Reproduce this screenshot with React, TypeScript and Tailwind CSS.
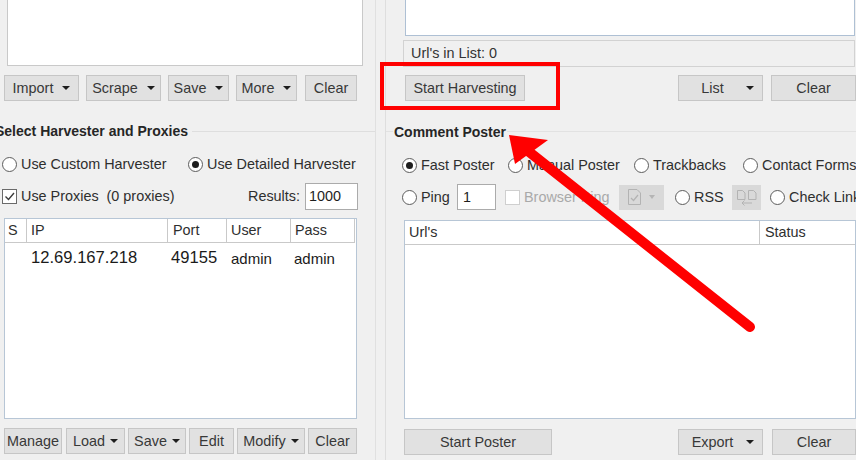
import React from "react";

function Caret() {
  return <span className="inline-block h-0 w-0 shrink-0 border-x-[4px] border-t-[4px] border-x-transparent border-t-[#1e1e1e]" />;
}

function Btn({
  className = "",
  drop,
  tight,
  children,
}: {
  className?: string;
  drop?: boolean;
  tight?: boolean;
  children: React.ReactNode;
}) {
  return (
    <div
      className={`flex h-[26px] shrink-0 items-center justify-center border border-[#c6c6c6] bg-[#e1e1e1] text-[#383838] ${
        tight ? "gap-[5px]" : "gap-[9px]"
      } ${className}`}
    >
      <span className="whitespace-nowrap">{children}</span>
      {drop && <Caret />}
    </div>
  );
}

function SplitBtn({ className = "", children }: { className?: string; children: React.ReactNode }) {
  return (
    <div className={`flex h-[26px] shrink-0 items-center border border-[#c6c6c6] bg-[#e1e1e1] text-[#383838] ${className}`}>
      <span className="w-[67px] text-center">{children}</span>
      <Caret />
    </div>
  );
}

function Radio({ on }: { on?: boolean }) {
  return (
    <span className="flex h-[15px] w-[15px] shrink-0 items-center justify-center rounded-full border border-[#5c5c5c] bg-white">
      {on && <span className="h-[7px] w-[7px] rounded-full bg-[#1e1e1e]" />}
    </span>
  );
}

function RadioItem({ on, label, className = "" }: { on?: boolean; label: string; className?: string }) {
  return (
    <div className={`flex shrink-0 items-center gap-[4px] ${className}`}>
      <Radio on={on} />
      <span className="whitespace-nowrap">{label}</span>
    </div>
  );
}

function CheckBox({ on, disabled }: { on?: boolean; disabled?: boolean }) {
  return (
    <span
      className={`flex h-[15px] w-[15px] shrink-0 items-center justify-center border bg-white ${
        disabled ? "border-[#cfcfcf]" : "border-[#6a6a6a]"
      }`}
    >
      {on && (
        <svg width="11" height="11" viewBox="0 0 11 11">
          <path d="M1.5 5.5 L4.5 8.5 L10 2" fill="none" stroke="#3a3a3a" strokeWidth="1.4" />
        </svg>
      )}
    </span>
  );
}

export default function App() {
  return (
    <div className="relative flex h-[460px] w-[856px] overflow-hidden bg-[#f0f0f0] font-['Liberation_Sans',Arial,sans-serif] text-[14.4px] leading-none text-[#2e2e2e]">
      {/* LEFT COLUMN */}
      <div className="flex w-[375px] shrink-0 flex-col">
        <div className="ml-[7px] mt-[-2px] h-[68px] w-[356px] shrink-0 border border-[#c9c9c9] bg-white" />
        <div className="ml-[4px] mt-[9px] flex h-[26px] shrink-0">
          <Btn className="w-[75px]" drop>
            Import
          </Btn>
          <Btn className="ml-[7px] w-[75px]" drop>
            Scrape
          </Btn>
          <Btn className="ml-[7px] w-[61px]" drop>
            Save
          </Btn>
          <Btn className="ml-[7px] w-[61px]" drop>
            More
          </Btn>
          <Btn className="ml-[8px] w-[52px]">Clear</Btn>
        </div>

        <div className="mt-[22px] flex h-[16px] shrink-0 items-center">
          <span className="ml-[-5px] whitespace-nowrap text-[14px] font-bold text-[#262626]">Select Harvester and Proxies</span>
          <span className="ml-[4px] h-px flex-1 bg-[#dedede]" />
        </div>

        <div className="mt-[11px] flex h-[28px] shrink-0 items-center">
          <RadioItem className="ml-[2px] w-[186px]" label="Use Custom Harvester" />
          <RadioItem on label="Use Detailed Harvester" />
        </div>

        <div className="mt-[4px] flex h-[28px] shrink-0 items-center">
          <div className="ml-[2px] flex items-center gap-[4px]">
            <CheckBox on />
            <span className="whitespace-pre">Use Proxies  (0 proxies)</span>
          </div>
          <span className="ml-auto">Results:</span>
          <div className="ml-[5px] mr-[17px] flex h-[27px] w-[53px] items-center border border-[#ababab] bg-white pl-[3px] text-[#1e1e1e]">
            1000
          </div>
        </div>

        <div className="ml-[4px] mt-[8px] flex h-[201px] w-[353px] shrink-0 flex-col border border-[#b7c6d6] bg-white">
          <div className="flex h-[24px] shrink-0 items-center">
            <div className="flex h-full w-[22px] items-center border-b border-r border-[#c9c9c9] pl-[3px]">S</div>
            <div className="flex h-full w-[141px] items-center border-b border-r border-[#c9c9c9] pl-[4px]">IP</div>
            <div className="flex h-full w-[59px] items-center border-b border-r border-[#c9c9c9] pl-[5px]">Port</div>
            <div className="flex h-full w-[64px] items-center border-b border-r border-[#c9c9c9] pl-[4px]">User</div>
            <div className="flex h-full w-[64px] items-center border-b border-r border-[#c9c9c9] pl-[4px]">Pass</div>
          </div>
          <div className="flex h-[30px] shrink-0 items-center text-[#1a1a1a]">
            <span className="w-[22px]" />
            <span className="w-[141px] pl-[4px] text-[16.6px]">12.69.167.218</span>
            <span className="w-[59px] pl-[3px] text-[16.6px]">49155</span>
            <span className="w-[64px] pl-[4px] text-[15px]">admin</span>
            <span className="w-[64px] pl-[3px] text-[15px]">admin</span>
          </div>
        </div>

        <div className="ml-[4px] mt-[9px] flex h-[26px] shrink-0">
          <Btn className="w-[58px]">Manage</Btn>
          <Btn className="ml-[4px] w-[59px]" drop tight>
            Load
          </Btn>
          <Btn className="ml-[3px] w-[58px]" drop tight>
            Save
          </Btn>
          <Btn className="ml-[3px] w-[45px]">Edit</Btn>
          <Btn className="ml-[3px] w-[68px]" drop tight>
            Modify
          </Btn>
          <Btn className="ml-[3px] w-[49px]">Clear</Btn>
        </div>
      </div>

      {/* DIVIDER */}
      <div className="w-[10px] shrink-0 border-l border-[#e0e0e0]" />

      {/* RIGHT COLUMN */}
      <div className="flex w-[471px] min-w-0 shrink-0 flex-col overflow-hidden border-l border-[#dedede]">
        <div className="ml-[19px] mt-[-2px] h-[38px] w-[450px] shrink-0 border border-[#aec0d4] bg-white" />
        <div className="ml-[17px] mt-[4px] flex h-[27px] w-[452px] shrink-0 items-center border border-[#d2d2d2] pl-[7px] text-[#333]">
          Url's in List: 0
        </div>
        <div className="mt-[8px] flex h-[26px] w-[470px] shrink-0">
          <Btn className="ml-[19px] w-[120px]">Start Harvesting</Btn>
          <div className="flex-1" />
          <SplitBtn className="w-[85px]">List</SplitBtn>
          <Btn className="ml-[8px] w-[85px]">Clear</Btn>
        </div>

        <div className="mt-[30px] flex flex-1 flex-col border-t border-[#e2e2e2]">
          <div className="mt-[-8px] flex h-[16px] shrink-0 items-center">
            <span className="ml-[7px] bg-[#f0f0f0] px-[1px] text-[14px] font-bold text-[#262626]">Comment Poster</span>
          </div>

          <div className="mt-[11px] flex h-[28px] shrink-0 items-center">
            <RadioItem on className="ml-[16px] w-[106px]" label="Fast Poster" />
            <RadioItem className="w-[126px]" label="Manual Poster" />
            <RadioItem className="w-[109px]" label="Trackbacks" />
            <RadioItem label="Contact Forms" />
          </div>

          <div className="mt-[4px] flex h-[28px] shrink-0 items-center">
            <RadioItem className="ml-[16px] w-[55px]" label="Ping" />
            <div className="flex h-[26px] w-[39px] shrink-0 items-center border border-[#ababab] bg-white pl-[5px] text-[#1e1e1e]">
              1
            </div>
            <div className="ml-[9px] flex w-[114px] shrink-0 items-center gap-[4px]">
              <CheckBox disabled />
              <span className="whitespace-nowrap text-[#a9a9a9]">Browser Ping</span>
            </div>
            <div className="flex h-[25px] w-[45px] shrink-0 items-center gap-[7px] bg-[#d9d9d9] pl-[8px]">
              <svg width="15" height="18" viewBox="0 0 15 18">
                <path d="M1.5 1.5 H10 L13.5 5 V16.5 H1.5 Z" fill="none" stroke="#b3b3b3" strokeWidth="1" />
                <path d="M4 10 L6.5 12.5 L11 7" fill="none" stroke="#b3b3b3" strokeWidth="1.2" />
              </svg>
              <span className="inline-block h-0 w-0 border-x-[3.5px] border-t-[4px] border-x-transparent border-t-[#b5b5b5]" />
            </div>
            <RadioItem className="ml-[11px] w-[57px]" label="RSS" />
            <div className="flex h-[25px] w-[29px] shrink-0 items-center justify-center bg-[#d9d9d9]">
              <svg width="22" height="17" viewBox="0 0 22 17">
                <path d="M1.5 1.5 H6.5 L9 4 V10.5 H1.5 Z" fill="none" stroke="#b3b3b3" strokeWidth="1" />
                <path d="M12.5 1.5 H17.5 L20 4 V10.5 H12.5 Z" fill="none" stroke="#b3b3b3" strokeWidth="1" />
                <path d="M16 14 H6 M8.5 11.5 L6 14 L8.5 16.5" fill="none" stroke="#b3b3b3" strokeWidth="1" />
              </svg>
            </div>
            <RadioItem className="ml-[9px]" label="Check Links" />
          </div>

          <div className="ml-[18px] mt-[9px] flex h-[199px] w-[452px] shrink-0 flex-col border border-[#b7c6d6] bg-white">
            <div className="flex h-[24px] shrink-0">
              <div className="flex h-full w-[355px] items-center border-b border-r border-[#c9c9c9] pl-[4px]">Url's</div>
              <div className="flex h-full flex-1 items-center border-b border-[#c9c9c9] pl-[5px]">Status</div>
            </div>
          </div>

          <div className="mt-[10px] flex h-[26px] w-[470px] shrink-0">
            <Btn className="ml-[18px] w-[148px]">Start Poster</Btn>
            <div className="flex-1" />
            <SplitBtn className="w-[85px]">Export</SplitBtn>
            <Btn className="ml-[9px] w-[84px]">Clear</Btn>
          </div>
        </div>
      </div>

      {/* ANNOTATIONS */}
      <div className="pointer-events-none absolute left-[380px] top-[62px] h-[48px] w-[180px] border-[4px] border-[#ff0000]" />
      <svg className="pointer-events-none absolute left-0 top-0" width="856" height="460" viewBox="0 0 856 460">
        <line x1="750" y1="327" x2="528" y2="151" stroke="#ff0000" strokeWidth="10" strokeLinecap="round" />
        <polygon points="509,135 515,164 548,140" fill="#ff0000" />
      </svg>
    </div>
  );
}
